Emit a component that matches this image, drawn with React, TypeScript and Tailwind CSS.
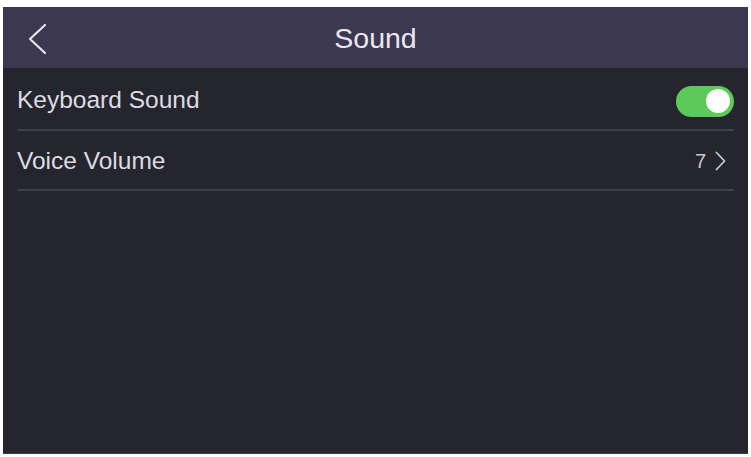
function Toggle() {
  return (
    <div className="w-[58px] h-[31px] rounded-full bg-[#5cc95a] flex items-center justify-end px-[4px] mt-[5px]">
      <div className="w-[24px] h-[24px] rounded-full bg-white" />
    </div>
  );
}

function App() {
  return (
    <main
      className="w-[751px] h-[457px] bg-white pt-[7px] pl-[3px] pr-[3px] pb-[3px]"
      style={{ fontFamily: '"Liberation Sans", Arial, sans-serif' }}
    >
      <div className="h-full flex flex-col bg-[#25252e] border-b border-[#3a3a42]">
        <header className="h-[61px] bg-[#3b384f] flex items-center relative">
          <svg className="absolute left-[25px] top-[16px]" width="20" height="32" viewBox="0 0 20 32" fill="none">
            <polyline points="17,2 2,16 17,30" stroke="#e6e6ee" strokeWidth="2.2" strokeLinecap="round" strokeLinejoin="round" />
          </svg>
          <h1 className="w-full text-center text-[28.5px] text-[#e8e8f0] pt-[1px]">Sound</h1>
        </header>
        <div className="px-[14px]">
          <div className="h-[63px] flex items-center justify-between border-b-2 border-[#3f3f48]">
            <span className="text-[24.5px] text-[#dcdce2] pt-[3px]">Keyboard Sound</span>
            <Toggle />
          </div>
          <div className="h-[60px] flex items-center justify-between border-b-2 border-[#3f3f48]">
            <span className="text-[24.5px] text-[#dcdce2] pt-[2px]">Voice Volume</span>
            <span className="flex items-center gap-[9px] text-[#c8c8d0] text-[20px] pt-[2px] pr-[8px]">
              7
              <svg width="11" height="20" viewBox="0 0 11 20" fill="none">
                <polyline points="1.5,1.5 9.5,10 1.5,18.5" stroke="#c8c8d0" strokeWidth="1.8" strokeLinecap="round" strokeLinejoin="round" />
              </svg>
            </span>
          </div>
        </div>
      </div>
    </main>
  );
}

export default App;
